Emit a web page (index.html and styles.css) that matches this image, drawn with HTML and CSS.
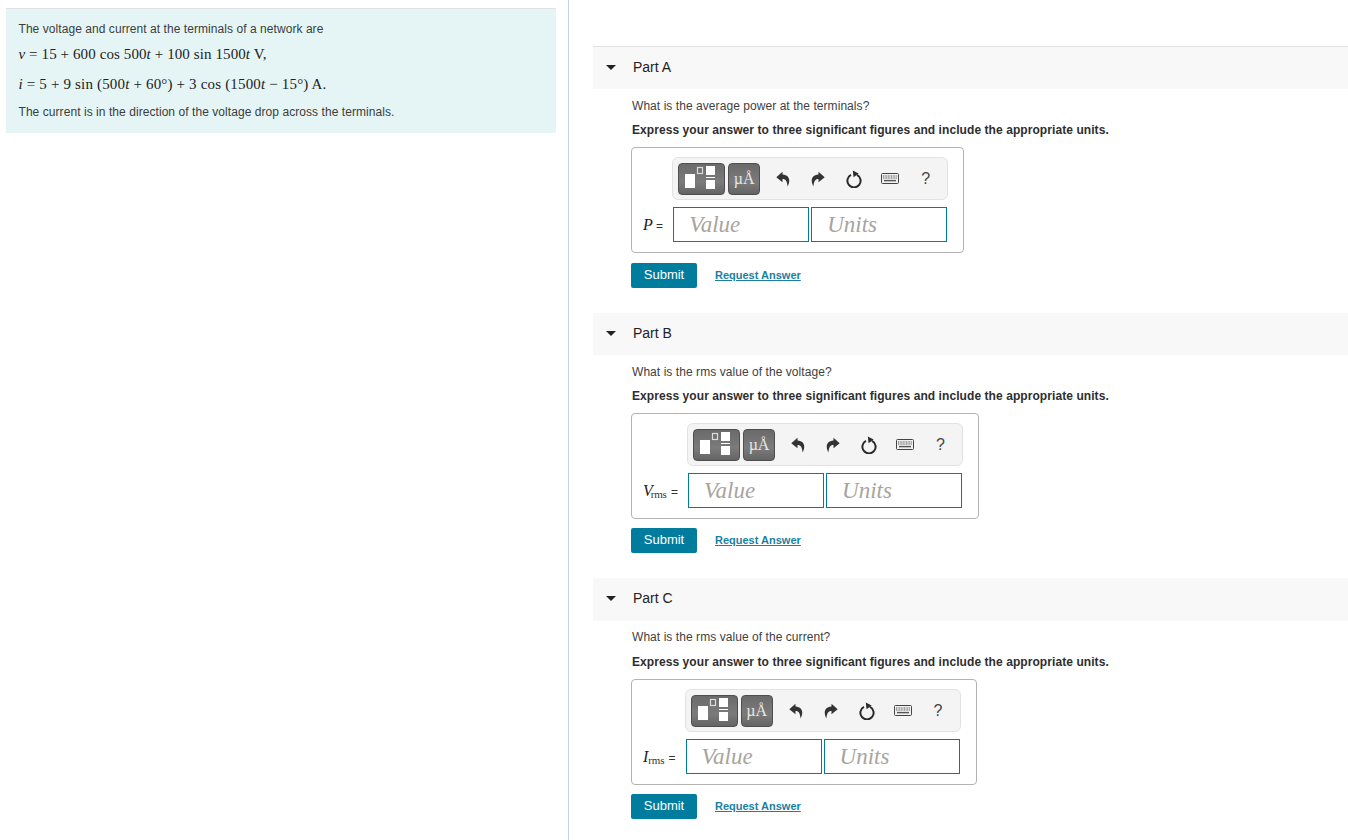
FILE: index.html
```html
<!DOCTYPE html>
<html lang="en">
<head>
<meta charset="utf-8">
<title>Network terminals</title>
<link rel="stylesheet" href="styles.css">
</head>
<body>
<svg class="defs" width="0" height="0" aria-hidden="true">
  <symbol id="i-undo" viewBox="0 0 14 16"><path d="M6.5 0.8 L0.3 6.2 L6.5 11.2 V8 C9.6 7.8 11 10 11.6 15.4 C14.4 10.4 14.2 4.2 6.5 3.6 Z" fill="#333"/></symbol>
  <symbol id="i-redo" viewBox="0 0 14 16"><path d="M7.5 0.8 L13.7 6.2 L7.5 11.2 V8 C4.4 7.8 3 10 2.4 15.4 C-0.4 10.4 -0.2 4.2 7.5 3.6 Z" fill="#333"/></symbol>
  <symbol id="i-reset" viewBox="0 0 16 18"><path d="M5 4.9 A6.6 6.6 0 1 0 11 4.9" fill="none" stroke="#2a2a2a" stroke-width="2"/><path d="M6.8 0.4 L12.6 3.6 L7.6 7.2 Z" fill="#2a2a2a"/></symbol>
  <symbol id="i-keys" viewBox="0 0 18 11"><rect x="0.5" y="0.5" width="17" height="10" rx="1" fill="#f0f0f0" stroke="#444"/><path d="M2 3h14M2 5h14" stroke="#555" stroke-width="1.2" stroke-dasharray="1 .6"/><path d="M3 7.6h12" stroke="#555" stroke-width="1.4"/></symbol>
  <symbol id="i-tmpl" viewBox="0 0 45 30"><rect x="6" y="10" width="10" height="14" fill="#fff"/><rect x="18.5" y="3.5" width="5" height="6" fill="none" stroke="#dcdcdc" stroke-width="1.2"/><rect x="27" y="2" width="9" height="9" fill="#fff"/><rect x="27" y="13" width="9" height="1" fill="#fff"/><rect x="27" y="16" width="9" height="9" fill="#fff"/></symbol>
</svg>
<main class="page">
  <aside class="left">
    <div class="intro">
      <p class="intro-text">The voltage and current at the terminals of a network are</p>
      <p class="eq eq-v"><i>v</i> = 15 + 600 cos 500<i>t</i> + 100 sin 1500<i>t</i> V,</p>
      <p class="eq eq-i"><i>i</i> = 5 + 9 sin (500<i>t</i> + 60°) + 3 cos (1500<i>t</i> − 15°) A.</p>
      <p class="intro-text">The current is in the direction of the voltage drop across the terminals.</p>
    </div>
  </aside>
  <section class="right">
    <article class="part part-a">
      <header class="part-head"><span class="caret"></span><span class="part-title">Part A</span></header>
      <div class="part-body">
        <p class="question">What is the average power at the terminals?</p>
        <p class="instr">Express your answer to three significant figures and include the appropriate units.</p>
        <div class="answer">
          <div class="toolbar">
            <span class="tbtn tbtn-wide"><svg class="tmpl"><use href="#i-tmpl"/></svg></span>
            <span class="tbtn tbtn-mu">µÅ</span>
            <svg class="ic ic-undo"><use href="#i-undo"/></svg>
            <svg class="ic ic-redo"><use href="#i-redo"/></svg>
            <svg class="ic ic-reset"><use href="#i-reset"/></svg>
            <svg class="ic ic-keys"><use href="#i-keys"/></svg>
            <span class="help">?</span>
          </div>
          <div class="inputs">
            <span class="lbl"><i>P</i> =</span>
            <span class="field">Value</span>
            <span class="field">Units</span>
          </div>
        </div>
        <div class="actions"><a class="submit">Submit</a><a class="request">Request Answer</a></div>
      </div>
    </article>
    <article class="part part-b">
      <header class="part-head"><span class="caret"></span><span class="part-title">Part B</span></header>
      <div class="part-body">
        <p class="question">What is the rms value of the voltage?</p>
        <p class="instr">Express your answer to three significant figures and include the appropriate units.</p>
        <div class="answer">
          <div class="toolbar">
            <span class="tbtn tbtn-wide"><svg class="tmpl"><use href="#i-tmpl"/></svg></span>
            <span class="tbtn tbtn-mu">µÅ</span>
            <svg class="ic ic-undo"><use href="#i-undo"/></svg>
            <svg class="ic ic-redo"><use href="#i-redo"/></svg>
            <svg class="ic ic-reset"><use href="#i-reset"/></svg>
            <svg class="ic ic-keys"><use href="#i-keys"/></svg>
            <span class="help">?</span>
          </div>
          <div class="inputs">
            <span class="lbl"><i>V</i><span class="sub">rms</span> =</span>
            <span class="field">Value</span>
            <span class="field">Units</span>
          </div>
        </div>
        <div class="actions"><a class="submit">Submit</a><a class="request">Request Answer</a></div>
      </div>
    </article>
    <article class="part part-c">
      <header class="part-head"><span class="caret"></span><span class="part-title">Part C</span></header>
      <div class="part-body">
        <p class="question">What is the rms value of the current?</p>
        <p class="instr">Express your answer to three significant figures and include the appropriate units.</p>
        <div class="answer">
          <div class="toolbar">
            <span class="tbtn tbtn-wide"><svg class="tmpl"><use href="#i-tmpl"/></svg></span>
            <span class="tbtn tbtn-mu">µÅ</span>
            <svg class="ic ic-undo"><use href="#i-undo"/></svg>
            <svg class="ic ic-redo"><use href="#i-redo"/></svg>
            <svg class="ic ic-reset"><use href="#i-reset"/></svg>
            <svg class="ic ic-keys"><use href="#i-keys"/></svg>
            <span class="help">?</span>
          </div>
          <div class="inputs">
            <span class="lbl"><i>I</i><span class="sub">rms</span> =</span>
            <span class="field">Value</span>
            <span class="field">Units</span>
          </div>
        </div>
        <div class="actions"><a class="submit">Submit</a><a class="request">Request Answer</a></div>
      </div>
    </article>
  </section>
</main>
</body>
</html>
```
FILE: styles.css
```css
* { box-sizing: border-box; }
html, body { margin: 0; height: 100%; overflow: hidden; background: #fff; }
body { font-family: "Liberation Sans", Arial, sans-serif; font-size: 12px; color: #333; }
p { margin: 0; }
.defs { position: absolute; }
.page { display: flex; height: 840px; }
.left { width: 569px; flex: none; border-right: 1px solid #c5d4e0; padding: 8px 12px 0 6px; }
.intro { background: #e5f5f6; border-top: 1px solid #dde3e3; height: 125px; padding: 0 13px 0 12.5px; }
.intro-text { font-size: 12px; letter-spacing: .06px; color: #3c3c3c; line-height: 14px; padding-top: 13px; }
.intro-text:last-child { padding-top: 12px; }
.eq { font-family: "Liberation Serif", serif; font-size: 15px; letter-spacing: .17px; color: #222; line-height: 18px; white-space: nowrap; }
.eq-v { padding-top: 9px; letter-spacing: .1px; }
.eq-i { padding-top: 12px; }
.right { flex: 1; padding: 46px 0 0 24px; }
.part-head { display: flex; align-items: center; height: 43px; padding-bottom: 2px; background: #f8f8f8; }
.part-a .part-head { border-top: 1px solid #e2e2e2; }
.part-b .part-head { height: 42px; }
.part-c .part-head { padding-bottom: 3px; }
.caret { width: 0; height: 0; margin-left: 13px; border-style: solid; border-width: 5px 5px 0; border-color: #222 transparent transparent; }
.part-title { margin-left: 17px; font-size: 14px; color: #222; }
.part-body { padding: 0 0 0 38px; }
.question { padding-top: 10px; padding-left: 1px; line-height: 14px; letter-spacing: .06px; color: #3e3e3e; }
.part-c .question { padding-top: 9px; }
.instr { padding-top: 9px; padding-left: 1px; line-height: 16px; font-weight: 700; letter-spacing: .073px; color: #2e2e2e; }
.part-c .instr { padding-top: 10px; }
.answer { display: inline-block; margin-top: 9px; padding: 9px 16px 10px 11px; border: 1px solid #b3b3b3; border-radius: 4px; vertical-align: top; }
.toolbar { display: flex; align-items: center; height: 43px; width: 276px; margin-left: auto; margin-right: -1px; background: #f4f4f4; border: 1px solid #e2e2e2; border-radius: 6px; padding-left: 5px; }
.tbtn { display: flex; align-items: center; justify-content: center; height: 32px; background: linear-gradient(#6a6a6a, #7b7b7b 60%, #646464); border: 1px solid #4f4f4f; border-radius: 4px; color: #e8e8e8; }
.tbtn-wide { width: 47px; }
.tbtn-mu { width: 32px; margin-left: 3px; font-family: "Liberation Serif", serif; font-size: 16px; }
.tmpl { width: 45px; height: 30px; }
.ic { flex: none; }
.ic-undo { width: 14px; height: 16px; margin-left: 16px; }
.ic-redo { width: 14px; height: 16px; margin-left: 21px; }
.ic-reset { width: 16px; height: 18px; margin-left: 21px; }
.ic-keys { width: 18px; height: 11px; margin-left: 19px; }
.help { margin-left: 22px; font-size: 16px; color: #444; }
.inputs { display: flex; align-items: center; margin-top: 7px; }
.lbl { font-size: 12px; white-space: nowrap; margin-right: 10px; color: #333; }
.lbl i { font-family: "Liberation Serif", serif; font-size: 16px; font-weight: 400; color: #222; }
.sub { font-family: "Liberation Serif", serif; font-size: 11px; position: relative; top: 2px; margin-right: 1px; letter-spacing: -.2px; }
.part-b .sub { margin-left: -2px; }
.field { width: 136px; height: 35px; border: 1px solid #007c9f; padding-left: 15px; font-family: "Liberation Serif", serif; font-style: italic; font-size: 23px; line-height: 33px; color: #a8a49e; background: #fff; }
.field + .field { margin-left: 2px; }
.actions { display: flex; align-items: center; margin-top: 10px; }
.part-b .actions, .part-c .actions { margin-top: 9px; }
.submit { display: block; width: 66px; height: 25px; background: #007c9f; border-radius: 2px; color: #fff; font-size: 13px; line-height: 23px; text-align: center; }
.request { margin: 0 0 2px 18px; font-size: 11px; line-height: 22px; font-weight: 700; color: #1a7fa3; text-decoration: underline; }
.part-b, .part-c { margin-top: 25px; }
```
